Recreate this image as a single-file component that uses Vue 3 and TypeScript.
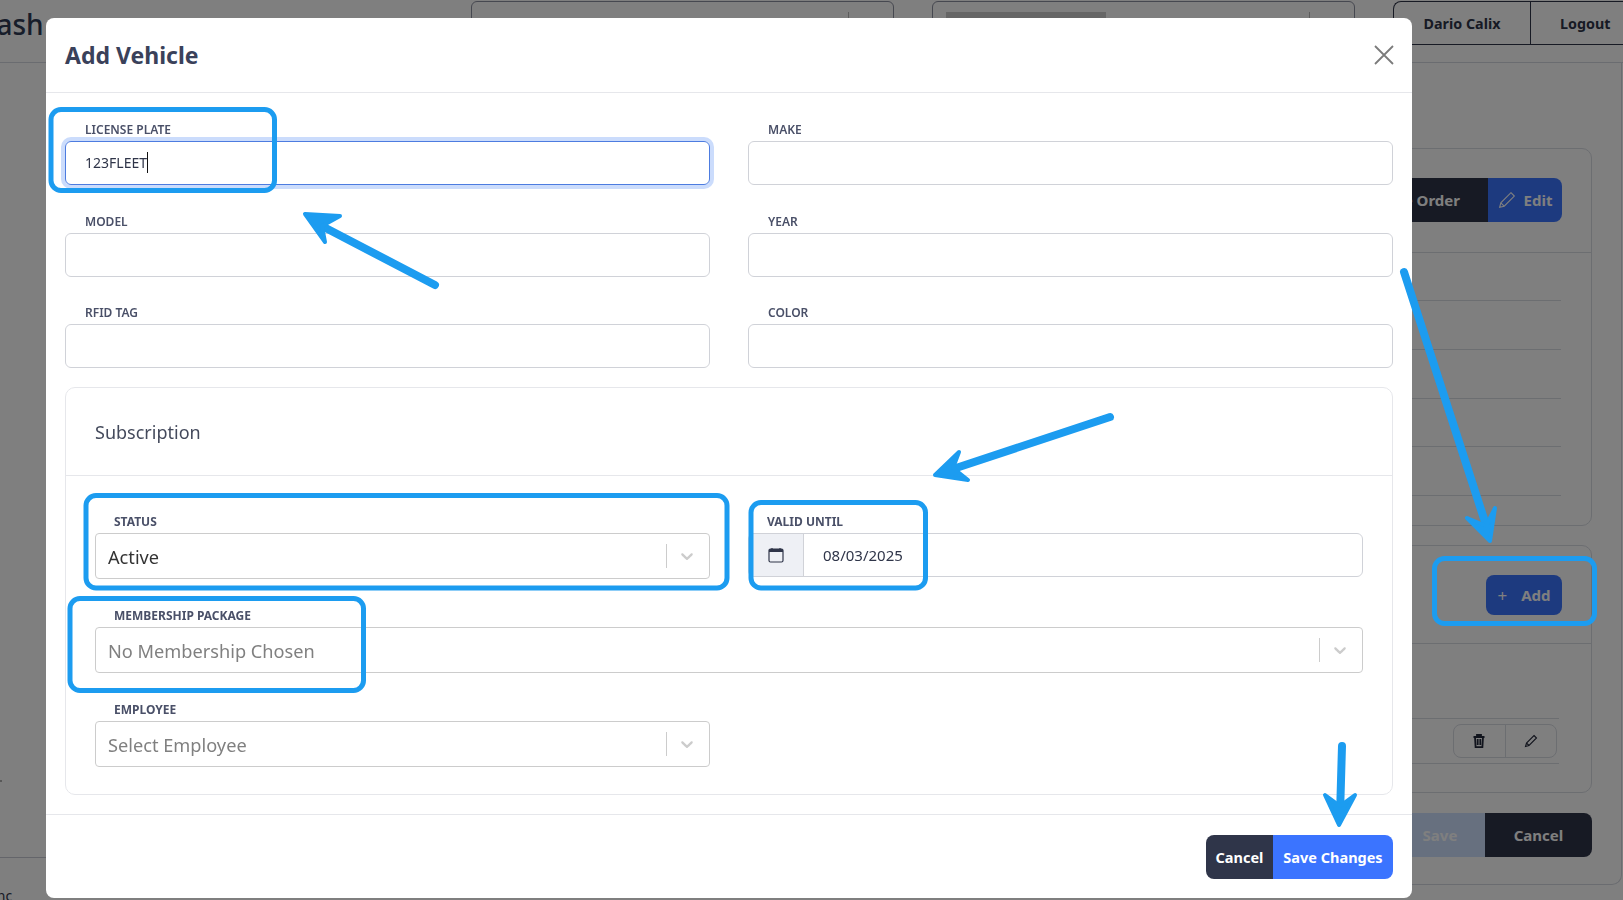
<script setup lang="ts">
const rows: string[][] = [
  ['LICENSE PLATE', 'MAKE'],
  ['MODEL', 'YEAR'],
  ['RFID TAG', 'COLOR'],
]
const bgLines: number[] = [0, 1, 2, 3, 4]
const chevron =
  'M4.516 7.548c0.436-0.446 1.043-0.481 1.576 0l3.908 3.747 3.908-3.747c0.533-0.481 1.141-0.446 1.574 0 0.436 0.445 0.408 1.197 0 1.615-0.406 0.418-4.695 4.502-4.695 4.502-0.217 0.223-0.502 0.335-0.787 0.335s-0.57-0.112-0.789-0.335c0 0-4.287-4.084-4.695-4.502s-0.436-1.17 0-1.615z'
</script>

<template>
  <div class="page">
    <header class="topbar">
      <span class="brand">Dash</span>
      <div class="fake-select"><i class="sep"></i></div>
      <div class="fake-select second"><b class="skeleton"></b><i class="sep"></i></div>
      <div class="user">
        <span class="user-name">Dario Calix</span>
        <span class="user-logout">Logout</span>
      </div>
    </header>
    <main class="content">
      <section class="bg-card first">
        <div class="bg-head">
          <div class="btn-pair">
            <span class="bg-btn dark">Service Order</span>
            <span class="bg-btn blue">
              <svg width="18" height="18" viewBox="0 0 16 16" fill="none" stroke="#fff" stroke-width="1">
                <path d="M11.500 1.500l3 3L5.500 13.500l-4 1 1-4zM2.500 10.500l3 3" />
              </svg>
              Edit
            </span>
          </div>
        </div>
        <div class="bg-lines">
          <div v-for="n in bgLines" :key="n" class="bg-line"></div>
        </div>
      </section>
      <section class="bg-card second-card">
        <div class="bg-head add-head">
          <span class="bg-btn blue add"><span class="plus">+</span> Add</span>
        </div>
        <div class="bg-table">
          <div class="bg-row">
            <div class="icon-pair">
              <span>
                <svg width="14" height="14" viewBox="0 0 14 14" fill="none" stroke="#23283a" stroke-width="1.8">
                  <path d="M1.500 3h11M5 3V1h4v2M3 3l.6 10.200h6.800L11 3M5.700 5v6M8.300 5v6" />
                </svg>
              </span>
              <span>
                <svg width="14" height="14" viewBox="0 0 14 14" fill="none" stroke="#23283a" stroke-width="1.100">
                  <path d="M10 1.500l2.500 2.500L5 11.500l-3.500 1 1-3.500zM2.500 9l2.500 2.500" />
                </svg>
              </span>
            </div>
          </div>
        </div>
      </section>
      <div class="bg-actions">
        <span class="bg-act save">Save</span>
        <span class="bg-act cancel">Cancel</span>
      </div>
    </main>
    <i class="speck"></i>
    <footer class="pagefoot"><span>Inc</span></footer>
  </div>

  <div class="backdrop"></div>

  <div class="modal">
    <div class="modal-head">
      <h2>Add Vehicle</h2>
      <svg class="close" width="20" height="20" viewBox="0 0 20 20" fill="none" stroke="#7b7b7b" stroke-width="1.8">
        <path d="M1 1l18 18M19 1L1 19" />
      </svg>
    </div>

    <div class="modal-body">
      <div class="grid">
        <template v-for="(row, i) in rows" :key="i">
          <div v-for="(label, j) in row" :key="label" class="field">
            <label>{{ label }}</label>
            <div class="input" :class="{ focus: i === 0 && j === 0 }">
              <template v-if="i === 0 && j === 0">123FLEET<span class="caret"></span></template>
            </div>
          </div>
        </template>
      </div>

      <section class="card">
        <div class="card-head">Subscription</div>
        <div class="card-body">
          <div class="sub-grid">
            <div class="field">
              <label>STATUS</label>
              <div class="select">
                <span class="value">Active</span>
                <i class="ind-sep"></i>
                <svg class="chev" width="20" height="20" viewBox="0 0 20 20"><path :d="chevron" /></svg>
              </div>
            </div>
            <div class="field date">
              <label>VALID UNTIL</label>
              <div class="date-group">
                <span class="addon">
                  <svg width="16" height="16" viewBox="0 0 16 16" fill="none">
                    <rect x="1" y="2" width="14" height="13" rx="1.500" stroke="#2f3549" stroke-width="1.200" />
                    <path d="M1 3.500a1.500 1.500 0 0 1 1.500-1.500h11A1.500 1.500 0 0 1 15 3.500V5H1z" fill="#2f3549" />
                    <path d="M4 1v1.500M12 1v1.500" stroke="#2f3549" stroke-width="1.200" />
                  </svg>
                </span>
                <span class="date-value">08/03/2025</span>
              </div>
            </div>
            <div class="field wide">
              <label>MEMBERSHIP PACKAGE</label>
              <div class="select">
                <span class="placeholder">No Membership Chosen</span>
                <i class="ind-sep"></i>
                <svg class="chev" width="20" height="20" viewBox="0 0 20 20"><path :d="chevron" /></svg>
              </div>
            </div>
            <div class="field">
              <label>EMPLOYEE</label>
              <div class="select">
                <span class="placeholder">Select Employee</span>
                <i class="ind-sep"></i>
                <svg class="chev" width="20" height="20" viewBox="0 0 20 20"><path :d="chevron" /></svg>
              </div>
            </div>
          </div>
        </div>
      </section>
    </div>

    <div class="modal-foot">
      <button class="btn cancel-btn">Cancel</button>
      <button class="btn save-btn">Save Changes</button>
    </div>
  </div>

  <svg class="annot" width="1623" height="900" viewBox="0 0 1623 900" fill="none" stroke="#1c9cf0" stroke-linecap="round" stroke-linejoin="round">
    <g stroke-width="5">
      <rect x="51" y="109.500" width="223.500" height="81" rx="10" />
      <rect x="86" y="495.500" width="641" height="92.500" rx="10" />
      <rect x="70" y="598.500" width="293.500" height="92" rx="10" />
      <rect x="751" y="502.500" width="174.500" height="85.500" rx="10" />
      <rect x="1434.500" y="558.500" width="160" height="65" rx="10" />
    </g>
    <g stroke-width="8">
      <path d="M435 285L318 224" />
      <path d="M1110 417L950 470" />
      <path d="M1404 272L1486 525" />
      <path d="M1342 746L1340 815" />
    </g>
    <g fill="#1c9cf0" stroke-width="4">
      <path d="M305 214L340 216L322 226L325 242z" />
      <path d="M935 475L959 452L953 468L968 480z" />
      <path d="M1490 541L1467 518L1486 526L1495 508z" />
      <path d="M1339 825L1325 795L1340 806L1355 795z" />
    </g>
  </svg>
</template>

<style>
html,
body {
  margin: 0;
  background: #fff;
  overflow: hidden;
}
</style>

<style scoped>
.page {
  width: 1623px;
  height: 900px;
  display: flex;
  flex-direction: column;
  overflow: hidden;
  font-family: "Noto Sans", "Open Sans", sans-serif;
  background: #fff;
  color: #2f3549;
}
.topbar {
  height: 63px;
  flex: none;
  box-sizing: border-box;
  border-bottom: 1px solid #d5d8e0;
  display: flex;
  align-items: flex-start;
  padding-top: 1px;
}
.brand {
  font-size: 28px;
  font-weight: 500;
  line-height: 46px;
  width: 471px;
  margin-left: -24px;
  margin-right: 24px;
  flex: none;
  color: #2f3a55;
}
.fake-select {
  width: 423px;
  height: 44px;
  box-sizing: border-box;
  border: 1px solid #8d90a0;
  border-radius: 6px;
  position: relative;
  margin-right: 38px;
  flex: none;
}
.sep {
  position: absolute;
  right: 44px;
  top: 10px;
  height: 24px;
  width: 1px;
  background: #bbb;
}
.skeleton {
  position: absolute;
  left: 13px;
  top: 10px;
  width: 160px;
  height: 8px;
  background: #ccc;
}
.user {
  flex: 1;
  display: flex;
  height: 44px;
  box-sizing: border-box;
  border: 1px solid #2f3549;
  border-right: none;
  border-radius: 8px 0 0 8px;
  font-weight: 700;
  font-size: 14.300px;
  align-items: center;
}
.user-name {
  width: 137px;
  height: 100%;
  box-sizing: border-box;
  border-right: 1px solid #2f3549;
  display: flex;
  align-items: center;
  justify-content: center;
}
.user-logout {
  padding-left: 29px;
}
.content {
  flex: 1;
  margin: 0 1px 15px auto;
  width: 1000px;
  box-sizing: border-box;
  border-right: 1px solid #d5d8e0;
  border-bottom: 1px solid #d5d8e0;
  border-radius: 0 0 10px 0;
  padding: 85px 29px 0 0;
  display: flex;
  flex-direction: column;
}
.bg-card {
  border: 1px solid #d9dce3;
  border-radius: 10px;
  box-sizing: border-box;
}
.bg-card.first {
  height: 378px;
}
.bg-card.second-card {
  height: 248px;
  margin-top: 19px;
}
.bg-head {
  height: 104px;
  box-sizing: border-box;
  border-bottom: 1px solid #d9dce3;
  display: flex;
  justify-content: flex-end;
  align-items: flex-start;
  padding: 29px 29px 0 0;
}
.add-head {
  height: 98px;
  padding-top: 29px;
}
.btn-pair {
  display: flex;
  font-weight: 700;
  font-size: 15px;
}
.bg-btn {
  height: 44px;
  display: inline-flex;
  align-items: center;
  gap: 8px;
  color: #fff;
  font-weight: 700;
  font-size: 15px;
  font-family: "Noto Sans", sans-serif;
  box-sizing: border-box;
}
.bg-btn.dark {
  background: #2f3549;
  padding: 0 28px;
  border-radius: 8px 0 0 8px;
}
.bg-btn.blue {
  background: #3b74ff;
  width: 74px;
  justify-content: center;
  border-radius: 0 8px 8px 0;
}
.bg-btn.add {
  width: 76px;
  height: 40px;
  border-radius: 8px;
  gap: 14px;
}
.plus {
  font-weight: 400;
  font-size: 17px;
}
.bg-lines {
  padding-right: 30px;
  padding-top: 47px;
}
.bg-line {
  height: 48.75px;
  box-sizing: border-box;
  border-top: 1px solid #d9dce3;
}
.bg-table {
  padding: 74px 32px 0 0;
}
.bg-row {
  height: 46px;
  box-sizing: border-box;
  border-top: 1px solid #d9dce3;
  border-bottom: 1px solid #d9dce3;
  display: flex;
  justify-content: flex-end;
  align-items: center;
  padding-right: 2px;
}
.icon-pair {
  display: flex;
  border: 1px solid #d9dce3;
  border-radius: 8px;
  height: 34px;
  width: 104px;
  box-sizing: border-box;
}
.icon-pair span {
  flex: 1;
  display: flex;
  align-items: center;
  justify-content: center;
}
.icon-pair span + span {
  border-left: 1px solid #d9dce3;
}
.bg-actions {
  display: flex;
  justify-content: flex-end;
  margin-top: 20px;
  height: 44px;
}
.bg-act {
  display: flex;
  align-items: center;
  justify-content: center;
  color: #fff;
  font-weight: 700;
  font-size: 15px;
}
.bg-act.save {
  width: 90px;
  background: #cee0ff;
  color: #fff;
  border-radius: 8px 0 0 8px;
}
.bg-act.cancel {
  width: 107px;
  background: #2f3549;
  border-radius: 0 8px 8px 0;
}
.speck {
  position: absolute;
  left: 0;
  top: 780px;
  width: 2px;
  height: 2px;
  background: #b0b0b0;
}
.pagefoot {
  position: absolute;
  left: 0;
  top: 857px;
  width: 46px;
  height: 43px;
  box-sizing: border-box;
  border-top: 1px solid #c8cbd4;
  overflow: hidden;
  font-size: 14px;
  line-height: 18px;
}
.pagefoot span {
  display: block;
  margin: 29px 0 0 -8px;
}
.backdrop {
  position: fixed;
  inset: 0;
  background: rgba(0, 0, 0, 0.5);
}
.modal {
  position: fixed;
  left: 46px;
  top: 18px;
  width: 1366px;
  height: 880px;
  background: #fff;
  border-radius: 8px;
  display: flex;
  flex-direction: column;
  font-family: "Noto Sans", "Open Sans", sans-serif;
  color: #2f3549;
}
.modal-head {
  height: 75px;
  flex: none;
  box-sizing: border-box;
  border-bottom: 1px solid #e6e7eb;
  display: flex;
  align-items: center;
  justify-content: space-between;
  padding: 0 18px 0 19px;
}
.modal-head h2 {
  margin: 0;
  font-size: 23px;
  font-weight: 700;
  color: #3a415a;
}
.modal-body {
  flex: 1;
  padding: 29px 19px 0 19px;
  display: flex;
  flex-direction: column;
  gap: 19px;
}
.grid {
  display: grid;
  grid-template-columns: 645px 645px;
  column-gap: 38px;
  row-gap: 28.500px;
}
.field {
  display: flex;
  flex-direction: column;
}
.field label {
  height: 16px;
  line-height: 16px;
  margin: 0 0 3px 20px;
  font-size: 12px;
  font-weight: 600;
  color: #4a5068;
}
.input {
  height: 44px;
  box-sizing: border-box;
  border: 1px solid #d0d2d8;
  border-radius: 6px;
  padding: 0 19px 2px;
  display: flex;
  align-items: center;
  font-size: 14px;
  color: #2f3549;
}
.input.focus {
  border-color: #4d7ce0;
  box-shadow: 0 0 0 4px #cbdcfc;
}
.caret {
  width: 1px;
  height: 21px;
  background: #111;
}
.card {
  height: 408px;
  box-sizing: border-box;
  border: 1px solid #e6e7eb;
  border-radius: 10px;
  display: flex;
  flex-direction: column;
}
.card-head {
  height: 88px;
  flex: none;
  box-sizing: border-box;
  border-bottom: 1px solid #e6e7eb;
  padding-left: 29px;
  display: flex;
  align-items: center;
  font-size: 18px;
  color: #444a5c;
}
.card-body {
  padding: 38px 29px 0 29px;
}
.sub-grid {
  display: grid;
  grid-template-columns: 1fr 1fr;
  column-gap: 38px;
  row-gap: 29px;
}
.sub-grid .wide {
  grid-column: 1 / 3;
}
.sub-grid .field label {
  margin-left: 19px;
  font-weight: 700;
}
.select {
  height: 46px;
  box-sizing: border-box;
  border: 1px solid #cccccc;
  border-radius: 4px;
  display: flex;
  align-items: center;
  padding-left: 12px;
  font-size: 18.200px;
}
.value,
.placeholder {
  flex: 1;
  padding-top: 2px;
}
.value {
  color: #333;
}
.placeholder {
  color: #808080;
}
.ind-sep {
  width: 1px;
  height: 24px;
  background: #cccccc;
}
.chev {
  margin: 0 12px 0 10px;
  fill: #cccccc;
  flex: none;
}
.date-group {
  height: 44px;
  box-sizing: border-box;
  border: 1px solid #d0d2d8;
  border-radius: 6px;
  display: flex;
  align-items: center;
  font-size: 15px;
  color: #2f3549;
  overflow: hidden;
}
.addon {
  width: 55px;
  height: 100%;
  background: #eef0f5;
  border-right: 1px solid #d0d2d8;
  box-sizing: border-box;
  display: flex;
  align-items: center;
  justify-content: center;
}
.date-value {
  margin-left: 19px;
}
.modal-foot {
  height: 84px;
  flex: none;
  box-sizing: border-box;
  border-top: 1px solid #e6e7eb;
  display: flex;
  justify-content: flex-end;
  padding: 20px 19px 0 0;
}
.btn {
  height: 44px;
  border: none;
  color: #fff;
  font-family: inherit;
  font-size: 14.500px;
  font-weight: 700;
  padding: 0;
}
.cancel-btn {
  width: 67px;
  background: #2f3549;
  border-radius: 8px 0 0 8px;
}
.save-btn {
  width: 120px;
  background: #3b74ff;
  border-radius: 0 8px 8px 0;
}
.annot {
  position: fixed;
  left: 0;
  top: 0;
  pointer-events: none;
}
</style>
